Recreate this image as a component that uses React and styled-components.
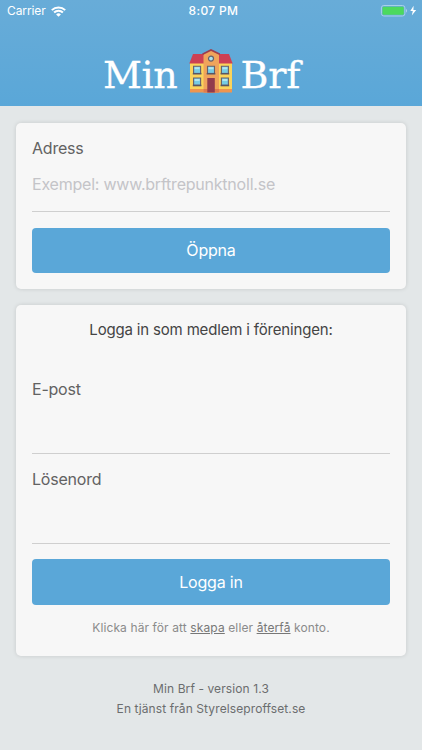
import React from 'react';
import styled, { createGlobalStyle } from 'styled-components';

const GlobalStyle = createGlobalStyle`
  * {
    box-sizing: border-box;
  }

  body {
    margin: 0;
    background: #e3e7e8;
    font-family: Inter, 'Liberation Sans', sans-serif;
  }
`;

const Screen = styled.div`
  height: 750px;
  overflow: hidden;
  background: #e3e7e8;
`;

const Header = styled.header`
  height: 106px;
  background: linear-gradient(#68acd8, #5aa7d8);
  color: #fff;
`;

const StatusBar = styled.div`
  height: 22px;
  padding: 0 5px 0 7px;
  display: grid;
  grid-template-columns: 1fr auto 1fr;
  align-items: center;
  font-size: 12px;
  line-height: 22px;
`;

const Carrier = styled.div`
  display: flex;
  align-items: center;
  gap: 5px;
  letter-spacing: -0.1px;
`;

const Time = styled.div`
  padding-left: 3px;
  font-weight: 500;
  letter-spacing: 0.35px;
`;

const Power = styled.div`
  display: flex;
  justify-content: flex-end;
  align-items: center;
`;

const Brand = styled.h1`
  height: 84px;
  margin: 0;
  padding: 27px 19px 0 0;
  display: flex;
  justify-content: center;
  font-family: 'DejaVu Serif', serif;
  font-size: 38px;
  font-weight: 400;
  line-height: 53px;
`;

const BrandWord = styled.span`
  letter-spacing: ${props => props.$spacing || '0'};
  -webkit-text-stroke: 0.3px #fff;
`;

const House = styled.svg`
  width: 44px;
  height: 44px;
  margin: 0 8px 0 11px;
`;

const Content = styled.main`
  padding: 16.5px 16px 0;
  display: flex;
  flex-direction: column;
  gap: 16px;
`;

const Card = styled.form`
  height: ${props => props.$height};
  padding: 16px;
  background: #f7f7f7;
  border-radius: 5px;
  box-shadow: 0 0 4px rgba(0, 0, 0, 0.13);
`;

const CardTitle = styled.h2`
  margin: 0 0 41px;
  color: #444;
  font-size: 15px;
  font-weight: 400;
  letter-spacing: -0.17px;
  line-height: 18px;
  text-align: center;
`;

const Field = styled.label`
  display: block;
  height: ${props => props.$height};
  color: #626262;
  font-size: 16px;
  letter-spacing: -0.22px;
  line-height: 18px;
`;

const Input = styled.input`
  display: block;
  width: 100%;
  height: ${props => props.$height || '56px'};
  padding: 0;
  border: 0;
  border-bottom: 1px solid #cfcfcf;
  outline: 0;
  background: transparent;
  color: #444;
  font: inherit;
  letter-spacing: inherit;

  &::placeholder {
    color: #c4c4c8;
    opacity: 1;
  }
`;

const Button = styled.button`
  display: block;
  width: 100%;
  height: 45.5px;
  padding: 0;
  border: 0;
  border-radius: 4px;
  background: #5aa7d8;
  color: #fff;
  font-family: inherit;
  font-size: 16px;
  letter-spacing: -0.2px;
`;

const Help = styled.p`
  margin: 14px 0 0;
  color: #8b8b8b;
  font-size: 12px;
  letter-spacing: 0.11px;
  line-height: 18px;
  text-align: center;
`;

const HelpLink = styled.a`
  color: #777;
  text-decoration: underline;
`;

const Footer = styled.footer`
  padding-top: 7px;
  color: #6b6d6e;
  font-size: 12px;
  letter-spacing: 0.1px;
  line-height: 20px;
  text-align: center;
`;

const WifiIcon = () => (
  <svg width="15" height="11" viewBox="0 0 15 11" fill="none" stroke="#fff" strokeWidth="2">
    <path d="M.8 4.1a9.6 9.6 0 0 1 13.4 0M3.1 6.5a6.2 6.2 0 0 1 8.8 0" />
    <path d="M7.5 10.8 5.1 8.4a3.5 3.5 0 0 1 4.8 0z" fill="#fff" stroke="none" />
  </svg>
);

const BatteryIcon = () => (
  <svg width="37" height="12" viewBox="0 0 37 12">
    <rect x="1.4" y="0.5" width="23.5" height="10.5" rx="2.4" fill="none" stroke="#a9d0ea" />
    <rect x="2.5" y="1.7" width="21.3" height="8.1" rx="1.2" fill="#4cd95e" />
    <path d="M26 4v3.6c.8-.3 1.1-1 1.1-1.8S26.8 4.3 26 4z" fill="#a9d0ea" />
    <path d="M33.6.7 30.3 6h2.5l-1 4.5L36.2 5h-2.8z" fill="#fff" />
  </svg>
);

const WINDOWS = [[4.6, 17.2], [18.5, 17.2], [32.4, 17.2], [4.6, 29], [32.4, 29]];

const HouseIcon = () => (
  <House viewBox="0 0 44 44" aria-hidden="true">
    <path d="M1 12h42v31H1z" fill="#fbd45b" />
    <path d="M1 40h42v3.5H1z" fill="#ef954f" />
    <path d="M4 5h36l3.7 9.5H.3z" fill="#cc4054" />
    <path d="M14.5 5 22 1l8 4v38.5H14.5z" fill="#f0a45b" />
    <path d="M14.5 40H30v3.5H14.5z" fill="#df7b50" />
    <path d="M13.5 5.3 22 1l8.8 4.3" fill="none" stroke="#9c3e4e" strokeWidth="1.7" />
    <circle cx="22" cy="9.6" r="2.5" fill="#a8e3ef" stroke="#68606b" strokeWidth="1.2" />
    {WINDOWS.map(([x, y]) => (
      <g key={`${x}-${y}`}>
        <path d={`M${x} ${y}h7v7.3h-7z`} fill="#77cce4" stroke="#68606b" strokeWidth="1.1" />
        <path d={`M${x + 1} ${y + 1}h5v2h-5z`} fill="#b2e6f0" />
        <path d={`M${x - 0.8} ${y + 7.5}h8.6`} stroke="#595664" strokeWidth="1.6" />
      </g>
    ))}
    <path d="M18.3 29h7.5v14.5h-7.5z" fill="#913b4d" />
  </House>
);

const App = () => (
  <>
    <GlobalStyle />
    <Screen>
      <Header>
        <StatusBar>
          <Carrier>
            Carrier
            <WifiIcon />
          </Carrier>
          <Time>8:07 PM</Time>
          <Power>
            <BatteryIcon />
          </Power>
        </StatusBar>
        <Brand>
          <BrandWord $spacing="-0.3px">Min</BrandWord>
          <HouseIcon />
          <BrandWord $spacing="-0.2px">Brf</BrandWord>
        </Brand>
      </Header>

      <Content>
        <Card $height="166.5px">
          <Field $height="89px">
            Adress
            <Input $height="55.5px" placeholder="Exempel: www.brftrepunktnoll.se" />
          </Field>
          <Button type="button">Öppna</Button>
        </Card>

        <Card $height="350.5px">
          <CardTitle>Logga in som medlem i föreningen:</CardTitle>
          <Field $height="90px">
            E-post
            <Input type="email" />
          </Field>
          <Field $height="89px">
            Lösenord
            <Input type="password" />
          </Field>
          <Button type="button">Logga in</Button>
          <Help>
            Klicka här för att <HelpLink>skapa</HelpLink> eller <HelpLink>återfå</HelpLink> konto.
          </Help>
        </Card>

        <Footer>
          Min Brf - version 1.3
          <br />
          En tjänst från Styrelseproffset.se
        </Footer>
      </Content>
    </Screen>
  </>
);

export default App;
